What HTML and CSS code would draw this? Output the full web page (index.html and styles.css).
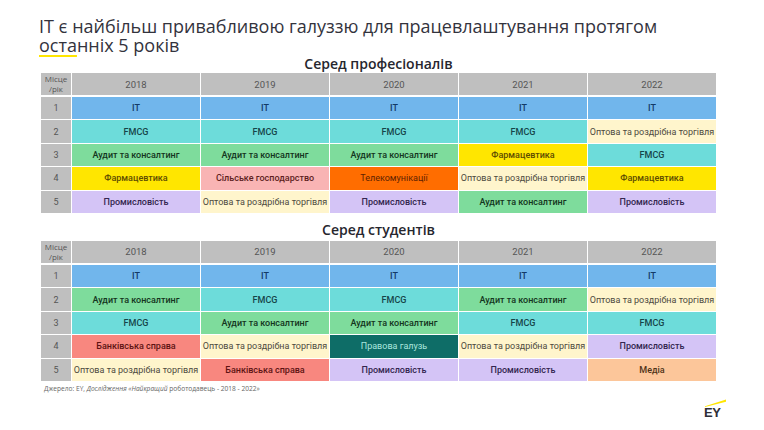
FILE: index.html
```html
<!DOCTYPE html>
<html lang="uk">
<head>
<meta charset="utf-8">
<title>ІТ є найбільш привабливою галуззю</title>
<link rel="stylesheet" href="styles.css">
</head>
<body>
<div class="slide">
  <h1 class="title">ІТ є найбільш привабливою галуззю для працевлаштування протягом<br><span class="accent">оста</span>нніх 5 років</h1>

  <section class="block">
    <h2 class="subtitle">Серед професіоналів</h2>
    <div class="table">
      <div class="row head">
        <div class="lab small">Місце<br>/рік</div>
        <div class="yr">2018</div><div class="yr">2019</div><div class="yr">2020</div><div class="yr">2021</div><div class="yr">2022</div>
      </div>
      <div class="body">
        <div class="row">
          <div class="lab">1</div>
          <div class="c it">IT</div><div class="c it">IT</div><div class="c it">IT</div><div class="c it">IT</div><div class="c it">IT</div>
        </div>
        <div class="row">
          <div class="lab">2</div>
          <div class="c fmcg">FMCG</div><div class="c fmcg">FMCG</div><div class="c fmcg">FMCG</div><div class="c fmcg">FMCG</div><div class="c trade">Оптова та роздрібна торгівля</div>
        </div>
        <div class="row">
          <div class="lab">3</div>
          <div class="c audit">Аудит та консалтинг</div><div class="c audit">Аудит та консалтинг</div><div class="c audit">Аудит та консалтинг</div><div class="c pharma">Фармацевтика</div><div class="c fmcg">FMCG</div>
        </div>
        <div class="row">
          <div class="lab">4</div>
          <div class="c pharma">Фармацевтика</div><div class="c agro">Сільське господарство</div><div class="c tel">Телекомунікації</div><div class="c trade">Оптова та роздрібна торгівля</div><div class="c pharma">Фармацевтика</div>
        </div>
        <div class="row">
          <div class="lab">5</div>
          <div class="c ind">Промисловість</div><div class="c trade">Оптова та роздрібна торгівля</div><div class="c ind">Промисловість</div><div class="c audit">Аудит та консалтинг</div><div class="c ind">Промисловість</div>
        </div>
      </div>
    </div>
  </section>

  <section class="block second">
    <h2 class="subtitle">Серед студентів</h2>
    <div class="table">
      <div class="row head">
        <div class="lab small">Місце<br>/рік</div>
        <div class="yr">2018</div><div class="yr">2019</div><div class="yr">2020</div><div class="yr">2021</div><div class="yr">2022</div>
      </div>
      <div class="body">
        <div class="row">
          <div class="lab">1</div>
          <div class="c it">IT</div><div class="c it">IT</div><div class="c it">IT</div><div class="c it">IT</div><div class="c it">IT</div>
        </div>
        <div class="row">
          <div class="lab">2</div>
          <div class="c audit">Аудит та консалтинг</div><div class="c fmcg">FMCG</div><div class="c fmcg">FMCG</div><div class="c audit">Аудит та консалтинг</div><div class="c trade">Оптова та роздрібна торгівля</div>
        </div>
        <div class="row">
          <div class="lab">3</div>
          <div class="c fmcg">FMCG</div><div class="c audit">Аудит та консалтинг</div><div class="c audit">Аудит та консалтинг</div><div class="c fmcg">FMCG</div><div class="c fmcg">FMCG</div>
        </div>
        <div class="row">
          <div class="lab">4</div>
          <div class="c bank">Банківська справа</div><div class="c trade">Оптова та роздрібна торгівля</div><div class="c law">Правова галузь</div><div class="c trade">Оптова та роздрібна торгівля</div><div class="c ind">Промисловість</div>
        </div>
        <div class="row">
          <div class="lab">5</div>
          <div class="c trade">Оптова та роздрібна торгівля</div><div class="c bank">Банківська справа</div><div class="c ind">Промисловість</div><div class="c ind">Промисловість</div><div class="c media">Медіа</div>
        </div>
      </div>
    </div>
  </section>

  <footer class="foot">
    <p class="source">Джерело: EY, <i>Дослідження «Найкращий</i> роботодавець - 2018 - 2022»</p>
    <div class="logo">
      <svg class="beam" width="22" height="8" viewBox="0 0 22 8"><polygon points="0,7.2 21,0.5 21,2.8 0,8" fill="#ffe600"/></svg>
      <span class="ey">EY</span>
    </div>
  </footer>
</div>
</body>
</html>
```

FILE: styles.css
```css
html, body {
  margin: 0;
  padding: 0;
  background: #ffffff;
}

.slide {
  width: 764px;
  height: 430px;
  box-sizing: border-box;
  padding: 17px 37px 0 41px;
  font-family: "Open Sans", "Noto Sans", sans-serif;
  color: #2e2e38;
  overflow: hidden;
}

.title {
  margin: 0 0 0 -2px;
  font-size: 18px;
  line-height: 19px;
  font-weight: 400;
  color: #33333d;
}

.accent {
  text-decoration: underline;
  text-decoration-color: #ffe600;
  text-decoration-thickness: 2px;
  text-underline-offset: 3px;
}

.block {
  width: 675px;
}

.subtitle {
  margin: 1px 0 1px;
  text-align: center;
  font-size: 14px;
  line-height: 16px;
  font-weight: 600;
  color: #26262e;
}

.second .subtitle {
  margin-top: 9px;
  margin-bottom: 3px;
}

.table {
  display: flex;
  flex-direction: column;
  gap: 2px;
  font-family: Roboto, "Liberation Sans", sans-serif;
}

.body {
  display: flex;
  flex-direction: column;
  gap: 1px;
}

.row {
  display: grid;
  grid-template-columns: 30px repeat(5, 1fr);
  column-gap: 1px;
  height: 22.4px;
}

.row.head {
  height: 22px;
}

.lab, .yr, .c {
  display: flex;
  align-items: center;
  justify-content: center;
  text-align: center;
  white-space: nowrap;
}

.lab {
  background: #bfbfbf;
  color: #555555;
  font-size: 9px;
}

.lab.small {
  font-size: 8px;
  line-height: 10px;
  font-family: "Open Sans", sans-serif;
}

.yr {
  background: #bfbfbf;
  color: #555555;
  font-size: 9.5px;
}

.c {
  font-size: 9px;
  font-weight: 500;
}

.it { background: #71b6ec; color: #143a66; }
.fmcg { background: #6ddcda; color: #164448; }
.audit { background: #7edc9c; color: #143520; }
.pharma { background: #ffe600; color: #5e4c00; }
.agro { background: #f9b4b4; color: #5e1e1e; }
.tel { background: #ff6d00; color: #5e2200; font-weight: 400; }
.trade { background: #fff5cc; color: #4d4a3e; font-weight: 400; }
.ind { background: #d4c4f6; color: #33264f; }
.bank { background: #f8877f; color: #5e1313; }
.law { background: #0e6d67; color: #a9e6de; font-weight: 400; }
.media { background: #fcc69a; color: #4f3318; }

.foot {
  display: flex;
  justify-content: space-between;
  align-items: flex-start;
  width: 686px;
  margin-top: 3px;
}

.source {
  margin: 0 0 0 3px;
  font-size: 6.6px;
  line-height: 9px;
  color: #666666;
  font-family: "Open Sans", sans-serif;
}

.source i {
  font-style: italic;
}

.logo {
  display: flex;
  flex-direction: column;
  align-items: flex-start;
  margin-top: 15px;
}

.beam {
  display: block;
  margin-left: 1px;
}

.ey {
  font-family: "Liberation Sans", Arial, sans-serif;
  font-weight: 700;
  font-size: 13px;
  line-height: 12px;
  color: #2e2e38;
  letter-spacing: -0.5px;
  margin-top: 0;
}
```
